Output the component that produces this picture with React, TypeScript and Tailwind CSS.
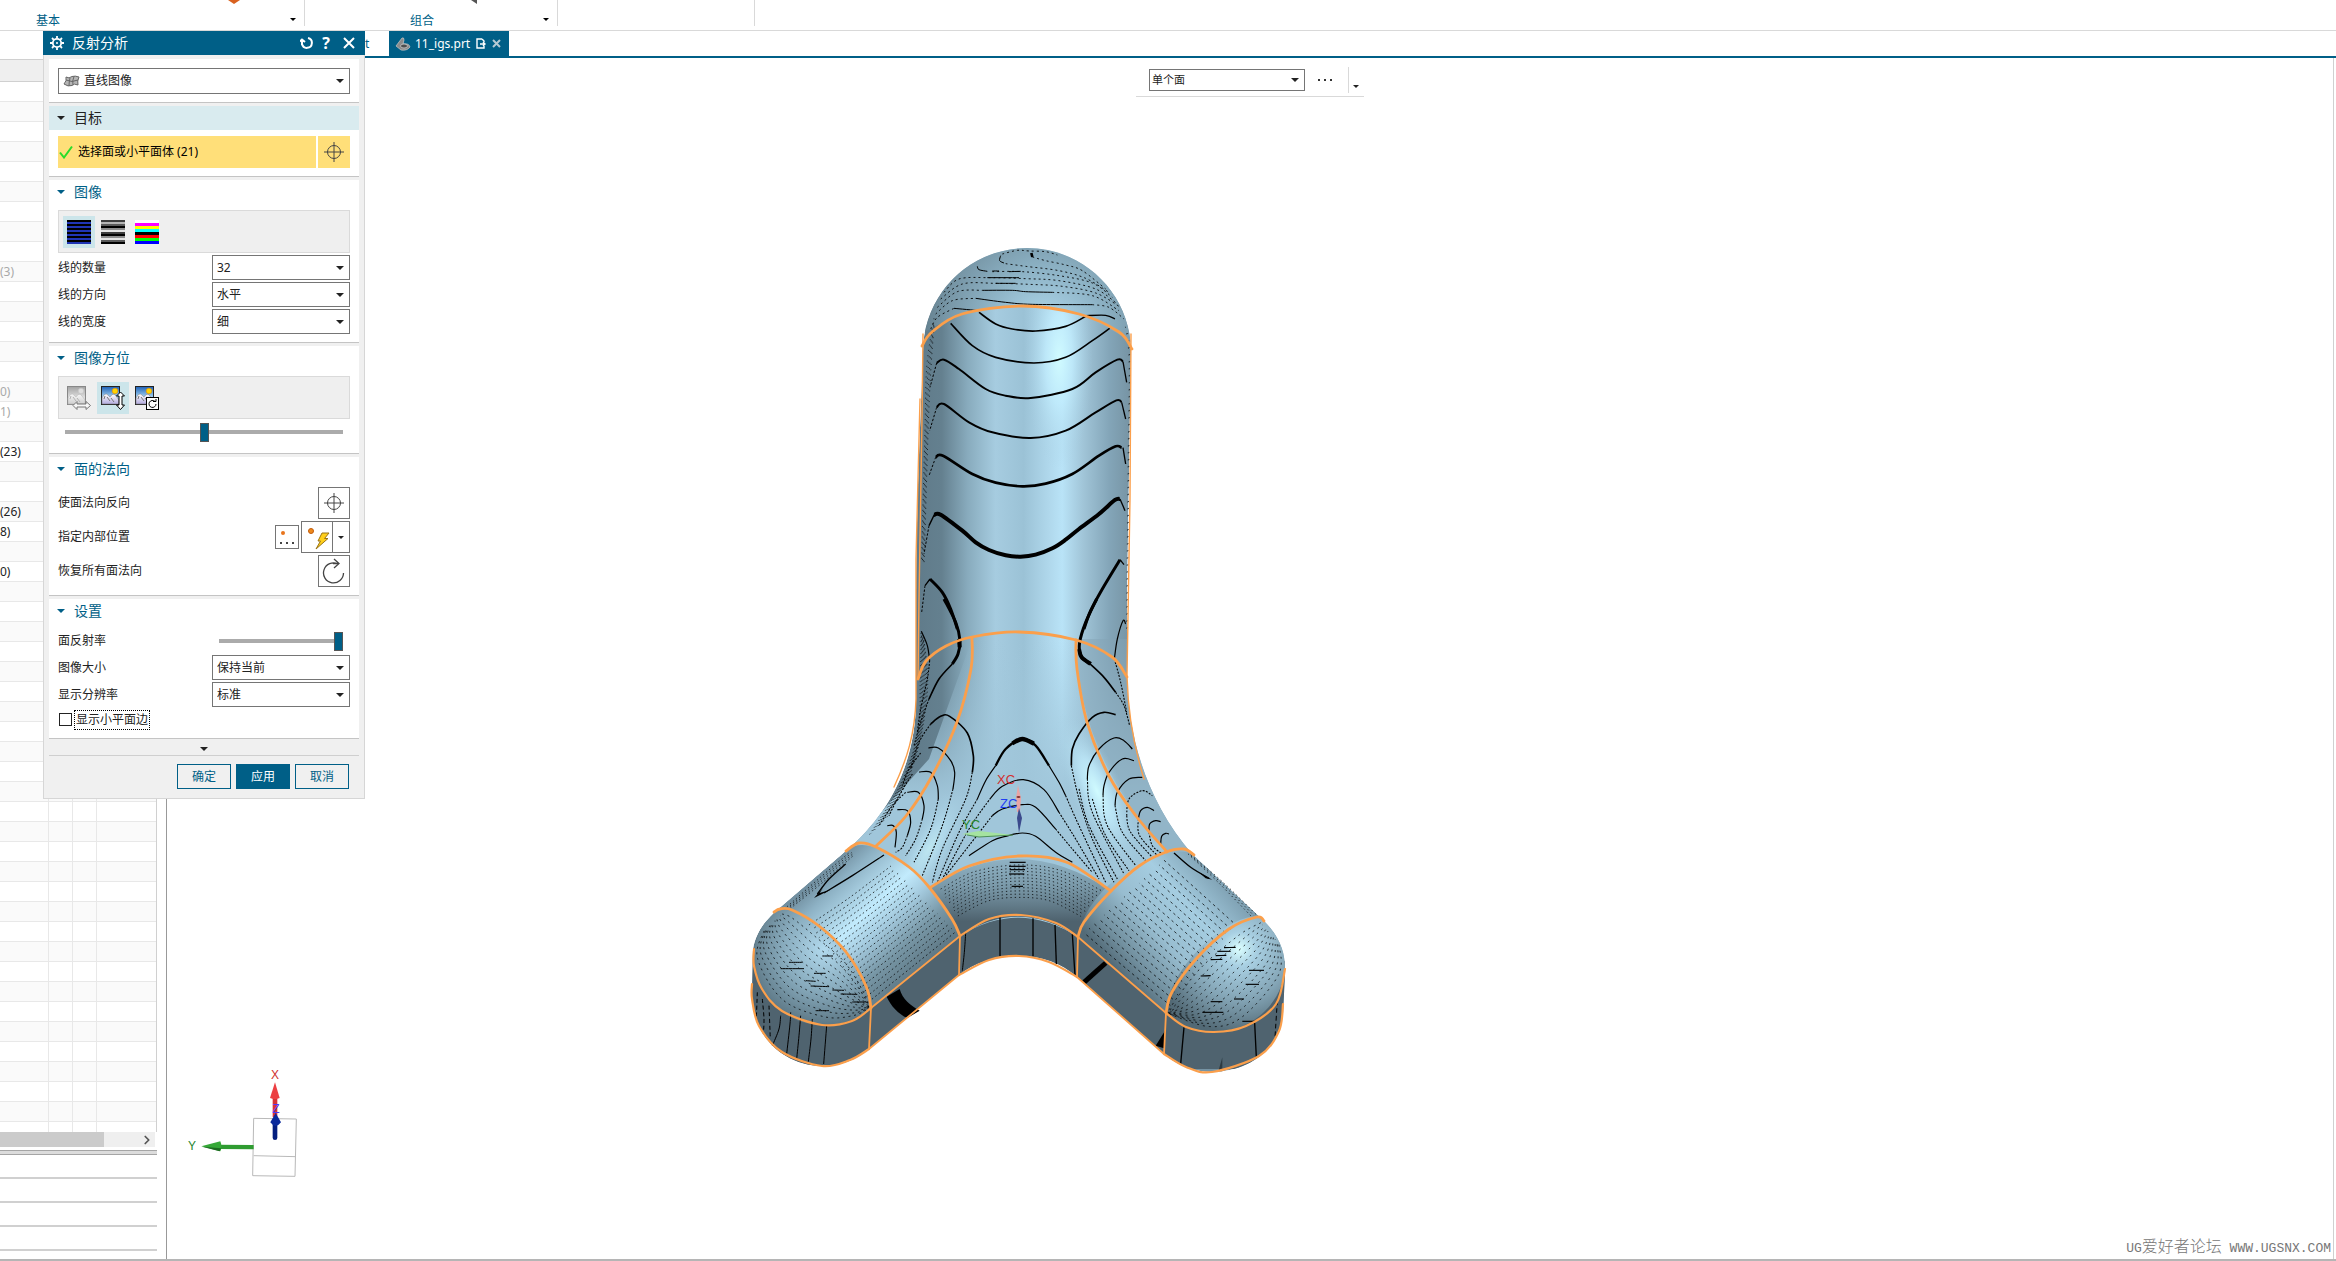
import { ReactNode } from 'react'
import { ChevronRight } from 'lucide-react'

type Point = [number, number]

const toPoints = (text: string): Point[] =>
  text.split(' ').map((pair) => pair.split(',').map(Number) as Point)

// Catmull-Rom spline through the points, as bezier segments
function spline(points: Point[]) {
  let d = `M${points[0][0]} ${points[0][1]}`
  for (let i = 0; i < points.length - 1; i++) {
    const p0 = points[i - 1] ?? points[i]
    const p1 = points[i]
    const p2 = points[i + 1]
    const p3 = points[i + 2] ?? p2
    d += `C${p1[0] + (p2[0] - p0[0]) / 6} ${p1[1] + (p2[1] - p0[1]) / 6} ${p2[0] - (p3[0] - p1[0]) / 6} ${p2[1] - (p3[1] - p1[1]) / 6} ${p2[0]} ${p2[1]}`
  }
  return d
}

const curve = (text: string) => spline(toPoints(text))

// curves evenly spread between two boundary curves
function between(from: string, to: string, count: number) {
  const a = toPoints(from)
  const b = toPoints(to)
  return Array.from({ length: count }, (_, i) => {
    const t = (i + 1) / (count + 1)
    return spline(a.map(([x, y], k) => [x + (b[k][0] - x) * t, y + (b[k][1] - y) * t]))
  })
}

function Curves({ items, width = 4, dash }: { items: string[]; width?: number; dash?: string }) {
  return (
    <g fill="none" stroke="#000" strokeWidth={width} strokeDasharray={dash}>
      {items.map((points, i) => (
        <path key={i} d={curve(points)} />
      ))}
    </g>
  )
}

function Family({ from, to, count, dash }: { from: string; to: string; count: number; dash: string }) {
  return (
    <g fill="none" stroke="#000" strokeWidth={2.6} strokeOpacity={0.85}>
      {between(from, to, count).map((d, i) => (
        <path key={i} d={d} strokeDasharray={dash} strokeDashoffset={i * 5} />
      ))}
    </g>
  )
}

const OUTLINE =
  'M924 353C924 296 970 249 1028 249C1086 249 1131 296 1132 350L1128 600L1128 677C1129 735 1146 800 1193 855L1263 920C1282 938 1287 955 1286 975L1284 1015C1280 1052 1248 1073 1213 1073C1195 1073 1178 1066 1165 1055L1078 978C1062 964 1044 957 1020 957C995 957 975 964 960 976L870 1050C858 1060 843 1067 823 1067C782 1066 753 1035 753 995L754 950C757 934 764 925 775 914L847 852C890 815 917 765 917 700L917 600C917 520 921 430 924 353Z'

const EDGES = [
  '923,347 933,333 963,315 1023,307 1080,315 1120,333 1133,350',
  '919,680 927,662 947,647 973,638 1020,633 1077,641 1113,658 1128,678',
  '973,639 972,670 958,723 933,777 907,817 877,847',
  '1077,641 1078,670 1088,723 1110,777 1137,817 1168,853',
  '932,888 970,867 1020,857 1067,863 1112,892',
  '847,852 860,844 877,848 910,868 930,888 953,920 961,937',
  '775,913 781,910 793,911 820,927 847,953 867,987 872,1009',
  '1195,856 1185,850 1167,853 1140,867 1112,892 1085,923 1079,938',
  '1265,922 1258,918 1230,930 1197,960 1173,993 1167,1014',
  '755,950 755,967 763,990 783,1012 823,1026 853,1022 872,1009',
  '961,937 990,920 1022,916 1057,924 1079,938',
  '1167,1014 1187,1028 1215,1033 1247,1027 1277,1005 1286,970',
  '753,985 753,1000 760,1027 783,1053 823,1067 851,1061 870,1050',
  '960,976 990,961 1020,957 1050,963 1078,978',
  '1165,1055 1187,1068 1213,1073 1260,1057 1280,1032 1284,1005',
]

function Model() {
  return (
    <svg
      viewBox="740 240 560 840"
      className="absolute left-[572px] top-[181px] h-[840px] w-[560px]"
      aria-label="反射分析模型"
    >
      <defs>
        <linearGradient id="body" gradientUnits="userSpaceOnUse" x1="917" y1="0" x2="1132" y2="0">
          <stop offset="0" stopColor="#607b8a" />
          <stop offset=".12" stopColor="#64808f" />
          <stop offset=".24" stopColor="#88abbd" />
          <stop offset=".37" stopColor="#a6cce0" />
          <stop offset=".5" stopColor="#9bc2d6" />
          <stop offset=".62" stopColor="#b0d8ec" />
          <stop offset=".68" stopColor="#b9e3f7" />
          <stop offset=".78" stopColor="#a0c4d7" />
          <stop offset=".9" stopColor="#83a5b8" />
          <stop offset="1" stopColor="#7693a3" />
        </linearGradient>
        <linearGradient id="saddle" gradientUnits="userSpaceOnUse" x1="0" y1="640" x2="0" y2="800">
          <stop offset="0" stopColor="#a0c6da" stopOpacity="0" />
          <stop offset="1" stopColor="#a0c6da" />
        </linearGradient>
        <radialGradient id="dome" gradientUnits="userSpaceOnUse" cx="1045" cy="330" r="125">
          <stop offset="0" stopColor="#b3dcf0" />
          <stop offset=".45" stopColor="#8fb5c8" />
          <stop offset=".8" stopColor="#7796a6" />
          <stop offset="1" stopColor="#5f7a88" />
        </radialGradient>
        <linearGradient id="armLeft" gradientUnits="userSpaceOnUse" x1="810" y1="887" x2="917" y2="1000">
          <stop offset="0" stopColor="#718fa0" />
          <stop offset=".12" stopColor="#8db1c4" />
          <stop offset=".38" stopColor="#c2ebfd" />
          <stop offset=".52" stopColor="#a4cade" />
          <stop offset=".7" stopColor="#7796a5" />
          <stop offset="1" stopColor="#4f6571" />
        </linearGradient>
        <linearGradient id="armRight" gradientUnits="userSpaceOnUse" x1="1227" y1="887" x2="1123" y2="977">
          <stop offset="0" stopColor="#7fa1b3" />
          <stop offset=".3" stopColor="#a5cde1" />
          <stop offset=".6" stopColor="#98bdd0" />
          <stop offset=".85" stopColor="#718f9e" />
          <stop offset="1" stopColor="#536b78" />
        </linearGradient>
        <linearGradient id="fillet" x1="0" y1="0" x2="0" y2="1">
          <stop offset="0" stopColor="#8fb2c4" />
          <stop offset=".35" stopColor="#7a99a9" />
          <stop offset=".8" stopColor="#4e626e" />
        </linearGradient>
        <radialGradient id="capLeft" gradientUnits="userSpaceOnUse" cx="825" cy="950" r="82">
          <stop offset="0" stopColor="#b2daee" />
          <stop offset=".5" stopColor="#88abbd" />
          <stop offset="1" stopColor="#566f7c" />
        </radialGradient>
        <radialGradient id="capRight" gradientUnits="userSpaceOnUse" cx="1240" cy="950" r="85">
          <stop offset="0" stopColor="#dbffff" />
          <stop offset=".2" stopColor="#a9d0e3" />
          <stop offset=".6" stopColor="#83a4b5" />
          <stop offset="1" stopColor="#526975" />
        </radialGradient>
        <radialGradient id="shine">
          <stop offset="0" stopColor="#d0fbff" />
          <stop offset=".4" stopColor="#c3efff" stopOpacity=".7" />
          <stop offset="1" stopColor="#a5cde1" stopOpacity="0" />
        </radialGradient>
        <clipPath id="solid">
          <path d={OUTLINE} />
        </clipPath>
      </defs>

      <g clipPath="url(#solid)">
        <path d={OUTLINE} fill="url(#body)" />
        <path d="M1128 640L1200 860L1112 895L930 890L840 860L930 760L973 640Z" fill="url(#saddle)" />
        <path d="M1077 640C1078 720 1110 790 1168 853L1200 860L1128 640Z" fill="#83a4b6" fillOpacity=".5" />
        <ellipse cx="1060" cy="360" rx="34" ry="110" fill="url(#shine)" />
        <ellipse cx="1098" cy="792" rx="26" ry="85" transform="rotate(-24 1098 792)" fill="url(#shine)" />
        <ellipse cx="930" cy="850" rx="22" ry="70" transform="rotate(30 930 850)" fill="url(#shine)" opacity=".6" />
        <path d="M910 345C923 333 963 307 1023 307C1080 307 1120 333 1140 350V240H900Z" fill="url(#dome)" />
        <path d="M753 950L753 1070H1290V960L1167 1014L1079 938Q1020 900 961 937L872 1009Z" fill="#4f636f" />
        <path d="M932 888Q1020 830 1112 892L1079 938Q1020 898 961 937Z" fill="url(#fillet)" />
        <path d="M775 913L847 852C870 830 930 870 961 937L872 1009C865 960 820 915 775 913Z" fill="url(#armLeft)" />
        <path d="M1265 922L1195 856C1170 840 1090 880 1079 938L1167 1014C1172 970 1240 905 1265 922Z" fill="url(#armRight)" />
        <path
          d="M775 911C810 905 870 960 872 1009C860 1020 843 1026 823 1026C790 1026 755 1000 755 955C757 935 765 922 775 911Z"
          fill="url(#capLeft)"
        />
        <path
          d="M1265 920C1245 905 1170 960 1167 1014C1180 1026 1195 1033 1215 1033C1255 1033 1287 1000 1286 965C1286 945 1277 930 1265 920Z"
          fill="url(#capRight)"
        />
      </g>

      <g transform="translate(880 230) scale(.33333)">
        <Curves
          width={5}
          items={[
            '300,250 350,285 400,300 470,306 560,292 620,262',
            '215,283 280,350 350,385 465,402 560,385 640,335 692,298',
          ]}
        />
        <Curves
          width={6}
          items={[
            '173,402 195,392 240,420 320,480 380,500 455,507 580,480 650,430 715,392 732,398',
            '173,535 195,525 270,580 340,610 455,627 560,605 650,550 712,514 728,520',
          ]}
        />
        <Curves width={8} items={['170,685 192,680 280,735 350,761 430,772 500,764 580,735 660,680 710,652 728,656']} />
        <Curves
          width={12}
          items={['165,858 185,857 250,905 290,940 330,963 380,979 425,983 470,977 520,958 560,932 600,900 660,855 708,813 723,810']}
        />
        <Curves
          width={4}
          items={['150,890 166,857', '723,810 738,845', '732,656 740,705', '728,520 740,570', '732,398 743,460', '138,1070 153,1050', '723,992 735,1007', '620,260 680,259 708,270']}
        />
        <Curves width={9} items={['153,1050 190,1090 215,1140 235,1200', '723,992 670,1080 635,1145 615,1200']} />
        <Curves
          width={3}
          dash="7 5"
          items={['173,402 153,475', '173,535 152,605', '170,685 150,740', '150,890 135,975', '138,1070 128,1150']}
        />
        <Curves
          width={3}
          items={['225,238 300,245', '290,208 380,220 460,226 640,227', '310,184 400,184 440,188 520,190', '325,146 420,146', '350,163 410,163', '295,112 300,122 325,127', '365,80 362,95 375,102', '340,126 360,126', '390,128 425,127']}
        />
        <Curves width={8} items={['457,72 460,84']} />
        <Curves
          width={2.6}
          dash="6 9"
          items={[
            '155,300 175,265 225,238',
            '170,255 220,215 290,208',
            '175,235 235,188 310,184',
            '520,190 640,200 720,245',
            '185,210 250,165 350,163 450,166 550,172 650,192 725,235',
            '195,190 240,150 330,146 440,149 540,155 650,180 715,225',
            '340,128 430,128 540,140 640,162 700,205',
            '380,104 440,112 540,125 620,148 690,190',
            '460,84 500,95 560,108 610,125 680,180',
            '370,75 415,64 450,66 500,68 535,78',
            '640,227 690,235 735,270',
          ]}
        />
        <Family dash="3 13" count={4} from="165,260 140,400 135,600 125,1000" to="165,300 158,450 150,620 138,1000" />
        <Family dash="3 18" count={2} from="735,290 748,400 745,700 740,1200" to="748,300 755,400 752,700 748,1200" />
      </g>

      <g transform="translate(860 600) scale(.33333)">
        <Curves width={9} items={['255,0 290,70 303,125 297,165 280,195', '713,0 680,70 662,130 665,170 690,192']} />
        <Curves width={12} items={['300,120 302,145', '660,150 668,175 695,195']} />
        <Curves width={13} items={['460,433 490,420 525,434']} />
        <Curves width={7} items={['410,500 440,450 490,420 530,440 570,500']} />
        <Curves
          width={5}
          items={[
            '280,195 240,240 210,300',
            '690,192 735,235 770,280',
            '215,375 245,352 272,352 325,402 343,470 340,520',
            '637,500 640,450 660,405 700,355 735,340 770,347',
          ]}
        />
        <Curves
          width={3.6}
          items={[
            '187,97 205,140 212,185',
            '800,75 792,65 775,120 766,180',
            '208,447 238,447 275,485 287,520 282,570',
            '180,519 215,520 235,560 238,600',
            '145,580 178,580 195,620 190,660',
            '115,632 145,635 155,670 145,710',
            '85,680 103,680 112,700 108,745',
            '685,540 690,500 720,450 765,417 795,425 820,450',
            '732,590 735,560 750,520 790,480 825,485',
            '768,620 775,580 810,540 850,535',
            '838,660 845,635 865,625 885,635',
            '870,700 872,675 890,665 905,668',
            '905,735 908,712 920,703 930,705',
            '355,600 380,545 410,500',
            '570,500 600,550 620,590',
            '395,597 430,562 493,542 555,572 600,640',
            '400,650 430,630 490,617 530,625 590,690',
            '330,770 400,725 440,712 490,702 530,712 590,760 640,790',
          ]}
        />
        <Curves
          width={3.2}
          dash="6 4"
          items={[
            '212,185 205,240 185,330 175,400',
            '766,180 785,250 803,340',
            '210,300 185,370 165,440',
            '770,280 795,320 812,380',
            '215,375 180,430 155,510',
            '185,462 150,510 130,560',
            '160,525 120,590 90,650',
            '140,580 100,620 60,680',
            '340,520 320,600 250,750 220,850',
            '282,570 250,680 190,830',
            '238,600 215,690 165,790',
            '190,660 170,720 140,770',
            '145,710 130,745 110,760',
            '355,600 300,700 235,850',
            '395,597 330,690 250,840',
            '400,650 330,740 260,830',
            '620,590 660,680 740,850',
            '600,640 650,720 720,840',
            '590,690 640,750 700,820',
            '637,500 660,600 700,720 765,850',
            '660,570 690,680 775,840',
            '685,540 700,640 795,825',
            '700,600 740,710 810,815',
            '732,590 745,680 830,800',
            '768,620 790,700 860,785',
            '803,650 815,700 880,775',
            '803,650 810,600 850,575 880,590',
            '838,660 842,710 895,770',
            '870,700 880,740 910,765',
          ]}
        />
        <Family dash="3 9" count={7} from="185,100 180,250 175,400 120,560 20,720" to="195,120 210,250 190,400 150,540 90,650" />
        <Family dash="4 9" count={11} from="240,862 340,810 480,788 610,806 735,868" to="300,960 390,915 480,905 570,915 660,960" />
        <Curves width={3.6} items={['452,790 500,790', '450,802 500,802', '452,812 498,812', '450,825 496,825', '458,862 492,862']} />
      </g>

      <g transform="translate(730 820) scale(.33333)">
        <Family
          dash="5 8"
          count={19}
          from="230,305 350,225 475,130"
          to="428,562 560,455 690,350"
        />
        <Family dash="4 8" count={4} from="170,262 260,180 360,95" to="190,268 290,190 380,110" />
        <Curves width={4} items={['465,108 370,170 285,222', '265,225 300,180 350,135']} />
        <path d="M255 237L282 207L272 222L305 212Z" />
        <Family
          dash="6 11"
          count={11}
          from="165,280 200,285 270,335 350,410 400,500 420,560"
          to="100,340 75,430 150,560 280,610 370,598 420,568"
        />
        <Curves width={3} items={['155,449 225,449', '180,430 220,430', '255,463 290,463', '230,485 260,487', '280,411 312,411', '335,525 385,526', '245,501 300,503', '310,513 345,514', '260,575 300,575', '370,549 410,549']} />
        <Curves width={3} items={['155,590 150,630 130,680', '185,580 183,615 173,705', '215,590 210,650 203,720', '250,600 246,660 238,728', '293,620 284,735', '710,342 706,400 700,455']} />
        <Curves width={3} dash="12 8" items={['100,540 105,600 103,645', '85,520 82,600', '120,560 124,660']} />
        <path d="M473 533L512 510C520 540 545 560 572 575L535 597C508 585 485 560 473 533Z" />
      </g>

      <g transform="translate(1030 820) scale(.33333)">
        <Family dash="8 10" count={17} from="420,110 520,200 630,300" to="150,355 280,465 412,575" />
        <Family dash="4 9" count={3} from="490,110 590,190 690,285" to="470,100 560,190 660,295" />
        <Curves width={4} items={['435,102 485,145 540,178']} />
        <path d="M510 160L550 182L530 178Z" />
        <Family
          dash="6 12"
          count={11}
          from="690,305 620,335 510,425 440,520 415,580"
          to="755,380 760,480 650,610 550,632 420,585"
        />
        <Curves width={3.4} items={['585,386 620,385', '565,397 605,397', '560,410 592,409', '545,422 580,421', '515,471 545,470', '520,580 583,580', '660,454 705,454', '650,496 690,496', '545,548 580,548', '615,540 645,540', '640,607 680,607']} />
        <Curves width={4} items={['12,298 12,412', '78,318 82,435', '130,345 138,470', '465,625 455,735', '677,612 682,715', '-87,295 -87,412']} />
        <Curves width={3} dash="14 9" items={['745,545 738,655']} />
        <Curves width={15} items={['230,432 165,490']} />
        <path d="M408 635L405 688L380 680Z" />
        <path d="M580 715V757H568Z" fill="#2c3a42" />
      </g>

      <g fill="none" stroke="#fb9f4b" strokeLinejoin="round" strokeLinecap="round">
        {EDGES.map((edge, i) => (
          <path key={i} d={curve(edge)} strokeWidth={i < 9 ? 2.8 : 2.2} />
        ))}
        <path
          strokeWidth={1.8}
          d="M872 1009L961 937M870 1050L960 976M872 1009L870 1050M961 937L960 976M1079 938L1167 1014M1078 978L1165 1055M1079 938L1078 978M1167 1014L1165 1055"
        />
        <path
          strokeWidth={1.4}
          d="M924 335L923 420L920 600L919 680M921 400L917 560L917 700C916 735 908 760 895 788M1132 335L1131 500L1128 677C1129 715 1134 745 1145 780"
        />
      </g>

      <path d="M1019 786L1022 799L1021 813H1018L1017 799Z" fill="#e9a4a4" />
      <ellipse cx="1019.500" cy="798" rx="2" ry="1" fill="#7d3434" />
      <path d="M1020 809L1023 819L1020 834L1018 819Z" fill="#3b4a8c" />
      <path d="M963 835L980 832L1014 836L980 838Z" fill="#a5e3a0" />
      <path d="M968 836L980 838L1014 836" fill="none" stroke="#4d8f56" />
      <g className="font-['Liberation_Sans'] text-[13px]">
        <text x="998" y="785" fill="#d22f2f">XC</text>
        <text x="1001" y="809" fill="#1f3ff2">ZC</text>
        <text x="963" y="830" fill="#27862f">YC</text>
      </g>
    </svg>
  )
}

function Triad() {
  return (
    <svg viewBox="560 850 360 360" className="absolute bottom-[76px] left-5 size-[120px]" aria-label="坐标轴">
      <path d="M760 1016L888 1018L884 1190L757 1188ZM760 1128L886 1131" fill="none" stroke="#b9b9b9" strokeWidth="3" />
      <path d="M817 950H831V1012H817Z" fill="#d63236" />
      <path d="M824 908L838 955Q824 962 809 955Z" fill="#ec3f42" />
      <path d="M655 1095L760 1096V1109L655 1108Z" fill="#2f9c31" />
      <path d="M603 1100L660 1085Q666 1100 660 1115Z" fill="#35a837" />
      <path d="M605 1101L662 1106L658 1115Z" fill="#1c6a20" />
      <path d="M817 1030H831V1074A7 7 0 01817 1074Z" fill="#041f80" />
      <path d="M826 1000L842 1028Q826 1050 810 1028Z" fill="#0a2a9c" />
      <g className="font-['Liberation_Sans'] text-[36px]">
        <text x="812" y="897" fill="#d03030">X</text>
        <text x="563" y="1111" fill="#27862f">Y</text>
        <text x="816" y="1000" fill="#4b3cf5">Z</text>
      </g>
    </svg>
  )
}

function Caret({ className = 'h-1 w-2' }: { className?: string }) {
  return (
    <svg viewBox="0 0 8 4" className={`shrink-0 fill-current ${className}`} aria-hidden="true">
      <path d="M0 0H8L4 4Z" />
    </svg>
  )
}

function Target() {
  return (
    <svg viewBox="0 0 22 22" className="size-[22px] fill-none stroke-[#444]" aria-hidden="true">
      <circle cx="11" cy="11" r="6.500" />
      <path d="M11 1V21M1 11H21" />
    </svg>
  )
}

interface SelectBoxProps {
  id: string
  value: string
  className?: string
  icon?: ReactNode
}

function SelectBox({ id, value, className = 'h-[25px] w-[138px] pl-1', icon }: SelectBoxProps) {
  return (
    <div className={`relative flex items-center border border-[#757575] bg-white ${className}`}>
      {icon}
      <select id={id} aria-label={value} className="h-full min-w-0 flex-1 appearance-none bg-transparent outline-none">
        <option>{value}</option>
      </select>
      <Caret className="pointer-events-none absolute right-[5px] h-1 w-2" />
    </div>
  )
}

function SelectRow({ id, label, value }: { id: string; label: string; value: string }) {
  return (
    <div className="flex items-center justify-between">
      <label htmlFor={id}>{label}</label>
      <SelectBox id={id} value={value} />
    </div>
  )
}

function Section({ title, active = false, children }: { title: string; active?: boolean; children: ReactNode }) {
  return (
    <section className="border-b border-[#c4c4c4] bg-white pb-2">
      <h2
        className={`flex h-6 items-center gap-[9px] pl-2 text-[14px] ${active ? 'bg-[#d9ebef] text-[#222]' : 'text-[#005f87]'}`}
      >
        <Caret />
        {title}
      </h2>
      <div className="px-[9px] pt-[6px]">{children}</div>
    </section>
  )
}

function Slider({ label, value, className }: { label: string; value: number; className: string }) {
  return (
    <input
      type="range"
      aria-label={label}
      defaultValue={value}
      className={`h-1 appearance-none bg-[#ababab] [&::-webkit-slider-thumb]:h-[19px] [&::-webkit-slider-thumb]:w-[9px] [&::-webkit-slider-thumb]:appearance-none [&::-webkit-slider-thumb]:border [&::-webkit-slider-thumb]:border-[#555] [&::-webkit-slider-thumb]:bg-[#005f87] ${className}`}
    />
  )
}

function ToolButton({ label, active = false, children }: { label: string; active?: boolean; children: ReactNode }) {
  return (
    <button type="button" aria-label={label} className={`flex size-8 items-center justify-center ${active ? 'bg-[#cce5ea]' : ''}`}>
      {children}
    </button>
  )
}

const STRIPES = {
  blue: ['#000', '#2035b5', '#000', '#2035b5', '#000', '#2035b5', '#000', '#2035b5', '#000', '#2035b5', '#000', '#2035b5'],
  gray: ['#3c3c3c', '#b4b4b4', '#5a5a5a', '#000', '#8c8c8c', '#e4e4e4', '#3c3c3c', '#000', '#8c8c8c', '#e4e4e4', '#5a5a5a', '#000'],
  color: ['#fff', '#f0f', '#ff0', '#0ff', '#000', '#f00', '#0f0', '#00f'],
}

function StripeIcon({ colors }: { colors: string[] }) {
  const height = 24 / colors.length
  return (
    <svg viewBox="0 0 24 24" className="size-6" aria-hidden="true">
      {colors.map((color, i) => (
        <rect key={i} y={i * height} width="24" height={height} fill={color} />
      ))}
    </svg>
  )
}

function PhotoIcon({ faded = false, children }: { faded?: boolean; children: ReactNode }) {
  return (
    <svg viewBox="0 0 24 24" className={`size-6 ${faded ? 'opacity-50 grayscale' : ''}`} aria-hidden="true">
      <defs>
        <linearGradient id="sky" x1="0" y1="0" x2="0" y2="1">
          <stop offset="0" stopColor="#1d5fb4" />
          <stop offset=".6" stopColor="#a8d6f5" />
        </linearGradient>
        <linearGradient id="snow" x1="0" y1="0" x2="0" y2="1">
          <stop offset="0" stopColor="#fff" />
          <stop offset="1" stopColor="#b3abdf" />
        </linearGradient>
      </defs>
      <rect x=".5" y=".5" width="18" height="18" fill="url(#sky)" stroke="#222" />
      <path d="M1 18V12Q4 6 7 9L9 11Q12 6 15 10L18 14V18Z" fill="url(#snow)" stroke="#777" strokeWidth=".5" />
      <path d="M6 11L9 15M10 12L13 16M3 13L4 10" stroke="#777" />
      <circle cx="14" cy="5" r="2.800" fill="#ffd400" stroke="#e58a00" strokeWidth=".6" />
      {children}
    </svg>
  )
}

function Dialog() {
  return (
    <form
      className="absolute left-[43px] top-[31px] z-10 w-[322px] text-[12px] leading-4 text-[#222]"
      onSubmit={(e) => e.preventDefault()}
    >
      <header className="flex h-6 items-center bg-[#005f87] pl-[7px] pr-[10px] text-white">
        <svg viewBox="0 0 14 14" className="size-[14px] fill-none stroke-white" aria-hidden="true">
          <circle cx="7" cy="7" r="4.200" strokeWidth="1.800" />
          <circle cx="7" cy="7" r="1" fill="#fff" stroke="none" />
          <path
            d="M7 0V2.500M7 11.500V14M0 7H2.500M11.500 7H14M2 2L3.800 3.800M10.200 10.200L12 12M12 2L10.200 3.800M3.800 10.200L2 12"
            strokeWidth="1.800"
          />
        </svg>
        <h1 className="ml-2 flex-1 text-[14px] leading-5">反射分析</h1>
        <button type="button" aria-label="重置">
          <svg viewBox="0 0 14 14" className="size-[14px] fill-none stroke-white stroke-2" aria-hidden="true">
            <path d="M8 2A5 5 0 1 1 2 8M2 9V4M0 5.500L2 3.500L5 6" />
          </svg>
        </button>
        <button type="button" className="ml-2 text-[16px] font-bold leading-5">?</button>
        <button type="button" aria-label="关闭" className="ml-[13px]">
          <svg viewBox="0 0 12 12" className="size-3 stroke-white stroke-2" aria-hidden="true">
            <path d="M1 1L11 11M11 1L1 11" />
          </svg>
        </button>
      </header>

      <div className="flex flex-col gap-[3px] border-x border-b border-[#d6d6d6] bg-[#f0f0f0] px-[5px] pb-[9px] pt-1">
        <div className="border-b border-[#c4c4c4] bg-white px-[9px] pb-2 pt-[9px]">
          <SelectBox
            id="kind"
            value="直线图像"
            className="h-[26px] w-full gap-1 pl-1"
            icon={
              <svg viewBox="0 0 17 12" className="h-3 w-[17px] fill-[#b5b5b5] stroke-[#666]" aria-hidden="true">
                <path d="M3 2Q6 4 9 1.500Q12 .500 16 2Q14 6 15 10Q11 8 9 10.500Q5 12 1 9Q4 6 3 2Z" />
                <path d="M7 3Q6 7 6 11M11 1.500Q9 6 10 10M3 5Q9 8 15 5" fill="none" />
              </svg>
            }
          />
        </div>

        <Section title="目标" active>
          <div className="flex gap-[2px]">
            <button type="button" className="flex h-8 flex-1 items-center gap-[5px] bg-[#ffdf79] pl-px text-black">
              <svg viewBox="0 0 14 14" className="size-[14px] fill-none stroke-[#2bdc2b] stroke-2" aria-hidden="true">
                <path d="M1 7.500L5 12.500L13 1.500" />
              </svg>
              选择面或小平面体 (21)
            </button>
            <button type="button" aria-label="选择" className="flex size-8 items-center justify-center bg-[#ffdf79]">
              <Target />
            </button>
          </div>
        </Section>

        <Section title="图像">
          <div className="flex h-[43px] items-center gap-[2px] border border-[#dadada] bg-[#efefef] pl-1">
            <ToolButton label="黑线" active>
              <StripeIcon colors={STRIPES.blue} />
            </ToolButton>
            <ToolButton label="黑白线">
              <StripeIcon colors={STRIPES.gray} />
            </ToolButton>
            <ToolButton label="彩色线">
              <StripeIcon colors={STRIPES.color} />
            </ToolButton>
          </div>
          <div className="mt-[2px] flex flex-col gap-[2px]">
            <SelectRow id="count" label="线的数量" value="32" />
            <SelectRow id="direction" label="线的方向" value="水平" />
            <SelectRow id="width" label="线的宽度" value="细" />
          </div>
        </Section>

        <Section title="图像方位">
          <div className="flex h-[43px] items-center gap-[2px] border border-[#dadada] bg-[#efefef] pl-1">
            <ToolButton label="水平移动">
              <PhotoIcon faded>
                <path d="M6 19.500L10 15.500V18H19V15.500L23.500 19.500L19 23.500V21H10V23.500Z" fill="#fff" stroke="#000" />
              </PhotoIcon>
            </ToolButton>
            <ToolButton label="竖直移动" active>
              <PhotoIcon>
                <path d="M19.500 6L23.500 10H21V19H23.500L19.500 23.500L15.500 19H18V10H15.500Z" fill="#fff" stroke="#000" />
              </PhotoIcon>
            </ToolButton>
            <ToolButton label="旋转">
              <PhotoIcon>
                <rect x="11.500" y="11.500" width="12" height="12" fill="#fff" stroke="#000" />
                <path d="M20 15.500A3.500 3.500 0 1 0 21 18M18 15.500H21V13" fill="none" stroke="#000" />
              </PhotoIcon>
            </ToolButton>
          </div>
          <div className="flex h-[26px] items-center justify-center">
            <Slider label="图像方位" value={50} className="w-[278px]" />
          </div>
        </Section>

        <Section title="面的法向">
          <div className="flex flex-col gap-[2px]">
            <div className="flex items-center justify-between">
              <span>使面法向反向</span>
              <button type="button" aria-label="使面法向反向" className="flex size-8 items-center justify-center border border-[#757575]">
                <Target />
              </button>
            </div>
            <div className="flex items-center">
              <span className="flex-1">指定内部位置</span>
              <button type="button" aria-label="点对话框" className="mr-[2px] border border-[#757575]">
                <svg viewBox="0 0 22 22" className="size-[22px] fill-[#444]" aria-hidden="true">
                  <circle cx="7" cy="7" r="2" fill="#e8741c" />
                  <path d="M4 16h2v2H4zM10 16h2v2H10zM16 16h2v2H16z" />
                </svg>
              </button>
              <button type="button" aria-label="自动判断点" className="border border-[#757575]">
                <svg viewBox="0 0 30 30" className="size-[30px]" aria-hidden="true">
                  <circle cx="9" cy="9" r="2.500" fill="#ee8a1d" stroke="#c25a0a" />
                  <path d="M20 11L27 11L22.500 16.500H26L14 27L18.500 19H16Z" fill="#ffcf1a" stroke="#9a7416" />
                </svg>
              </button>
              <button type="button" aria-label="更多点类型" className="flex h-8 w-[17px] items-center justify-center border border-l-0 border-[#757575]">
                <Caret className="h-[3px] w-[6px]" />
              </button>
            </div>
            <div className="flex items-center justify-between">
              <span>恢复所有面法向</span>
              <button type="button" aria-label="恢复所有面法向" className="flex size-8 items-center justify-center border border-[#757575]">
                <svg viewBox="0 0 24 26" className="h-[26px] w-6 fill-none stroke-[#444]" aria-hidden="true">
                  <path d="M16 6A10 10 0 1 0 21.500 15M11 5.500H17M12 1L17 5.500L12 10" strokeWidth="1.300" />
                </svg>
              </button>
            </div>
          </div>
        </Section>

        <Section title="设置">
          <div className="flex flex-col gap-[2px]">
            <div className="flex h-6 items-center justify-between pr-[7px]">
              <span>面反射率</span>
              <Slider label="面反射率" value={100} className="w-[124px]" />
            </div>
            <SelectRow id="size" label="图像大小" value="保持当前" />
            <SelectRow id="resolution" label="显示分辨率" value="标准" />
            <div className="flex h-[21px] items-center gap-[2px] pl-px">
              <input id="facets" type="checkbox" className="size-[13px] appearance-none border border-[#222] bg-white" />
              <label htmlFor="facets" className="border border-dotted border-black px-px leading-[18px]">
                显示小平面边
              </label>
            </div>
          </div>
        </Section>

        <button type="button" aria-label="展开" className="flex h-[14px] items-center justify-center border-b border-[#cfcfcf]">
          <Caret />
        </button>
        <footer className="flex justify-end gap-[5px] pr-[10px] pt-[5px] text-[#005f87]">
          <button className="h-[25px] w-[54px] border border-[#005f87]">确定</button>
          <button type="button" className="h-[25px] w-[54px] border border-[#005f87] bg-[#005f87] text-white">应用</button>
          <button type="button" className="h-[25px] w-[54px] border border-[#005f87]">取消</button>
        </footer>
      </div>
    </form>
  )
}

const ROW_TEXT: Record<number, { text: string; faded?: boolean }> = {
  9: { text: '(3)', faded: true },
  15: { text: '0)', faded: true },
  16: { text: '1)', faded: true },
  18: { text: '(23)' },
  21: { text: '(26)' },
  22: { text: '8)' },
  24: { text: '0)' },
}

function Navigator() {
  return (
    <aside className="flex w-[166px] shrink-0 flex-col pr-[9px] pt-7 text-[12px] leading-4">
      <div className="min-h-0 flex-1 overflow-hidden border-r border-t border-[#d0d0d0]">
        <table className="w-full table-fixed border-separate border-spacing-0">
          <thead>
            <tr className="h-[22px] bg-[#efefef]">
              <th className="w-[49px] border-b border-[#d0d0d0] p-0" />
              <th className="w-6 border-b border-[#d0d0d0] p-0" />
              <th className="w-6 border-b border-[#d0d0d0] p-0" />
              <th className="border-b border-[#d0d0d0] p-0" />
            </tr>
          </thead>
          <tbody>
            {Array.from({ length: 56 }, (_, i) => (
              <tr key={i} className="h-5 even:bg-[#fafafa]">
                <td className={`border-b border-r border-[#e8e8e8] p-0 ${ROW_TEXT[i]?.faded ? 'text-[#a9a9a9]' : 'text-[#222]'}`}>
                  {ROW_TEXT[i]?.text}
                </td>
                <td className="border-b border-r border-[#e8e8e8] p-0" />
                <td className="border-b border-r border-[#e8e8e8] p-0" />
                <td className="border-b border-[#e8e8e8] p-0" />
              </tr>
            ))}
          </tbody>
        </table>
      </div>
      <div className="mr-[2px] flex h-[15px] items-center bg-[#efefef]">
        <div className="h-full w-[104px] bg-[#cbcbcb]" />
        <ChevronRight className="ml-auto mr-[1px] size-[14px] stroke-[3px] text-[#555]" />
      </div>
      <div className="mt-[3px] h-[5px] border-y border-[#a5a5a5] bg-[#dcdcdc]" />
      <div className="mb-2">
        {[0, 1, 2, 3].map((row) => (
          <div key={row} className="h-6 border-b-2 border-[#d0d0d0]" />
        ))}
      </div>
    </aside>
  )
}

function Ribbon() {
  return (
    <div className="flex h-[31px] border-b border-[#d9d9d9] text-[12px] leading-4 text-[#005f87]">
      <div className="relative flex w-[305px] items-end pb-[1px] pl-9">
        <svg viewBox="0 0 12 4" className="absolute left-[228px] top-0 h-1 w-3" aria-hidden="true">
          <path d="M0 0H12L6 4Z" fill="#d9611f" />
        </svg>
        <span className="flex-1">基本</span>
        <Caret className="mb-2 mr-2 h-[3px] w-[6px] text-black" />
        <div className="mb-[3px] h-[26px] w-px bg-[#d9d9d9]" />
      </div>
      <div className="relative flex w-[253px] items-end pb-[1px]">
        <svg viewBox="0 0 6 4" className="absolute left-[166px] top-0 h-1 w-[6px]" aria-hidden="true">
          <path d="M0 0H6V4Z" fill="#555" />
        </svg>
        <span className="flex-1 pl-[105px]">组合</span>
        <Caret className="mb-2 mr-2 h-[3px] w-[6px] text-black" />
        <div className="mb-[3px] h-[26px] w-px bg-[#d9d9d9]" />
      </div>
      <div className="mb-1 w-[197px] border-r border-[#d9d9d9]" />
    </div>
  )
}

function TabBar() {
  return (
    <nav className="flex h-[27px] justify-start border-b-2 border-[#005f87] pl-[196px] text-[12px] text-[#005f87]">
      <button className="w-[26px] pl-[2px] text-left">t</button>
      <div className="flex w-[120px] items-center bg-[#005f87] pl-[6px] text-white">
        <svg viewBox="0 0 16 14" className="h-[14px] w-4" aria-hidden="true">
          <path d="M1 9L7 1Q9 0 9 3L8 7Q14 6 15 10Q12 14 6 13Z" fill="#8c8c8c" stroke="#c9c9c9" strokeWidth=".7" />
          <ellipse cx="9" cy="9" rx="3.500" ry="2" fill="#4e4e4e" stroke="#d8d8d8" strokeWidth=".7" />
        </svg>
        <span className="ml-1">11_igs.prt</span>
        <svg viewBox="0 0 10 11" className="ml-[6px] h-[11px] w-[10px] fill-none stroke-white" aria-hidden="true">
          <path d="M6 1H1V10H8V8M6 1L8 3V4M4 6H9M7 4L9 6L7 8" strokeWidth="1.400" />
        </svg>
        <button aria-label="关闭" className="ml-[6px]">
          <svg viewBox="0 0 9 9" className="size-[9px] stroke-[#b5c9d3] stroke-2" aria-hidden="true">
            <path d="M1 1L8 8M8 1L1 8" />
          </svg>
        </button>
      </div>
    </nav>
  )
}

function SelectionBar() {
  return (
    <div className="relative z-10 mx-auto flex h-[39px] w-[228px] items-center border-b border-[#d9d9d9] pl-[13px] pt-[6px] text-[11px] text-[#222]">
      <SelectBox id="scope" value="单个面" className="h-[22px] w-[156px] pl-[2px]" />
      <button aria-label="更多" className="ml-[13px] flex gap-1">
        <i className="size-[2px] bg-[#333]" />
        <i className="size-[2px] bg-[#333]" />
        <i className="size-[2px] bg-[#333]" />
      </button>
      <div className="ml-4 h-[26px] w-px bg-[#d9d9d9]" />
      <Caret className="ml-1 mt-3 h-[3px] w-[6px]" />
    </div>
  )
}

export default function App() {
  return (
    <div className="relative flex h-screen flex-col overflow-hidden bg-white font-['Noto_Sans','Noto_Sans_CJK_SC',sans-serif]">
      <Ribbon />
      <div className="flex min-h-0 flex-1 border-b-2 border-[#b5b5b5]">
        <Navigator />
        <div className="flex min-w-0 flex-1 flex-col border-l border-[#999]">
          <TabBar />
          <main className="relative mr-[2px] flex-1 border-r border-[#d0d0d0]">
            <SelectionBar />
            <Model />
            <Triad />
            <p className="absolute bottom-0 right-[2px] whitespace-pre font-['Liberation_Mono','Noto_Sans_CJK_SC',monospace] text-[13px] leading-5 text-[#777]">
              UG<span className="text-[16px] font-light">爱好者论坛</span> WWW.UGSNX.COM
            </p>
          </main>
        </div>
      </div>
      <Dialog />
    </div>
  )
}
